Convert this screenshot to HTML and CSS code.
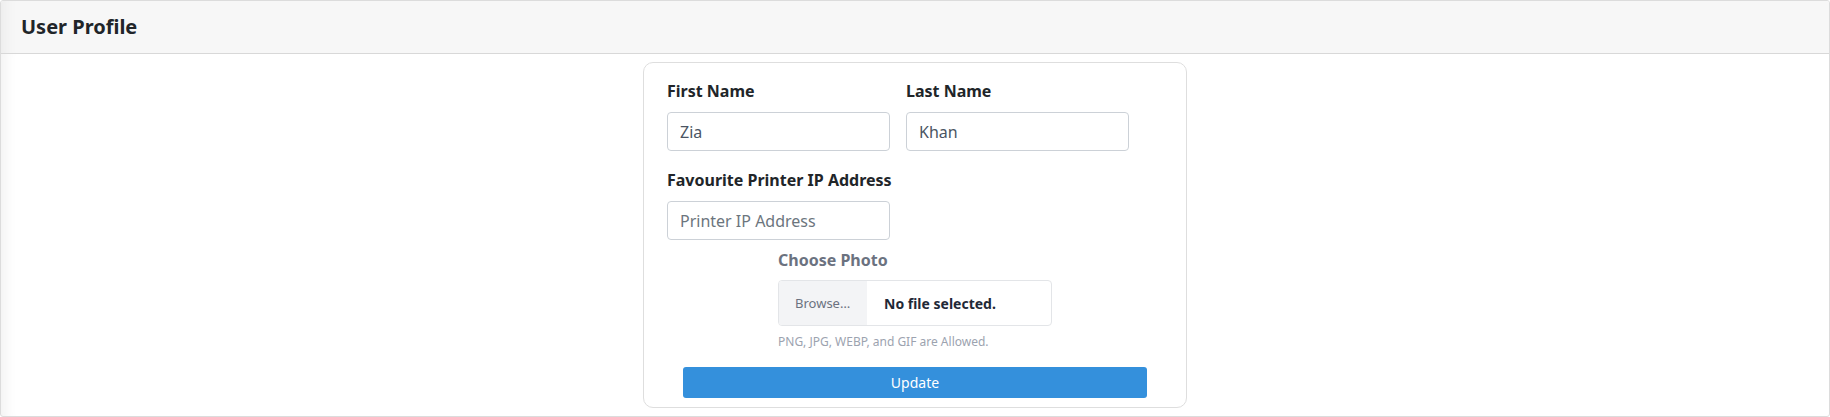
FILE: index.html
```html
<!DOCTYPE html>
<html lang="en">
<head>
<meta charset="utf-8">
<title>User Profile</title>
<link rel="stylesheet" href="styles.css">
</head>
<body>
<div class="panel">
  <div class="panel-header">User Profile</div>
  <div class="panel-body">
    <form class="card">
      <div class="row">
        <div class="group">
          <label class="label">First Name</label>
          <input class="input" type="text" value="Zia">
        </div>
        <div class="group">
          <label class="label">Last Name</label>
          <input class="input" type="text" value="Khan">
        </div>
      </div>
      <div class="group group-ip">
        <label class="label">Favourite Printer IP Address</label>
        <input class="input" type="text" placeholder="Printer IP Address">
      </div>
      <div class="photo">
        <label class="label label-muted">Choose Photo</label>
        <div class="file">
          <span class="file-btn">Browse…</span>
          <span class="file-name">No file selected.</span>
        </div>
        <p class="hint">PNG, JPG, WEBP, and GIF are Allowed.</p>
      </div>
      <button class="btn" type="button">Update</button>
    </form>
  </div>
</div>
</body>
</html>
```

FILE: styles.css
```css
* { box-sizing: border-box; }
html, body { margin: 0; padding: 0; }
body {
  font-family: "Noto Sans", "Open Sans", sans-serif;
  background: #fff;
  color: #212529;
}
.panel {
  width: 1830px;
  height: 417px;
  border: 1px solid #dcdcdc;
  border-radius: 3px;
  overflow: hidden;
  display: flex;
  flex-direction: column;
}
.panel-header {
  height: 53px;
  flex: none;
  background: #f7f7f7;
  border-bottom: 1px solid #d8d8d8;
  padding-left: 20px;
  font-size: 20px;
  font-weight: 700;
  line-height: 52px;
  color: #212529;
  box-shadow: inset 16px 0 14px -12px rgba(0,0,0,0.05);
}
.panel-body {
  flex: 1;
  display: flex;
  justify-content: center;
  align-items: flex-start;
  padding-top: 8px;
  box-shadow: inset 16px 0 14px -12px rgba(0,0,0,0.06);
}
.card {
  width: 544px;
  height: 346px;
  border: 1px solid #dedede;
  border-radius: 10px;
  padding: 16px 24px 8px 23px;
  display: flex;
  flex-direction: column;
}
.row {
  display: grid;
  grid-template-columns: 223px 223px;
  column-gap: 16px;
}
.group { display: flex; flex-direction: column; }
.group-ip { margin-top: 17px; width: 223px; }
.label {
  display: block;
  font-size: 16px;
  font-weight: 700;
  line-height: 24px;
  margin-bottom: 9px;
  color: #212529;
  white-space: nowrap;
}
.label-muted { color: #6b7280; margin-bottom: 8px; }
.input {
  width: 223px;
  height: 39px;
  border: 1px solid #ccd1d7;
  border-radius: 4px;
  padding: 0 12px;
  font-family: inherit;
  font-size: 16px;
  color: #4b5563;
  background: #fff;
  outline: none;
}
.input::placeholder { color: #6c757d; opacity: 1; }
.photo {
  margin-top: 8px;
  margin-left: 111px;
  width: 274px;
  display: flex;
  flex-direction: column;
}
.file {
  height: 46px;
  border: 1px solid #e3e5e8;
  border-radius: 4px;
  display: flex;
  align-items: stretch;
  overflow: hidden;
}
.file-btn {
  width: 88px;
  background: #f3f4f6;
  color: #6b7280;
  font-size: 13px;
  display: flex;
  align-items: center;
  padding-left: 16px;
}
.file-name {
  display: flex;
  align-items: center;
  padding-left: 17px;
  font-size: 14px;
  font-weight: 700;
  color: #1f2937;
}
.hint {
  margin: 7px 0 0;
  font-size: 12px;
  line-height: 18px;
  color: #9ca3af;
}
.btn {
  margin-top: 16px;
  margin-left: 16px;
  width: 464px;
  height: 31px;
  border: none;
  border-radius: 3px;
  background: #3490dc;
  color: #fff;
  font-family: inherit;
  font-size: 14px;
  cursor: pointer;
}
```
